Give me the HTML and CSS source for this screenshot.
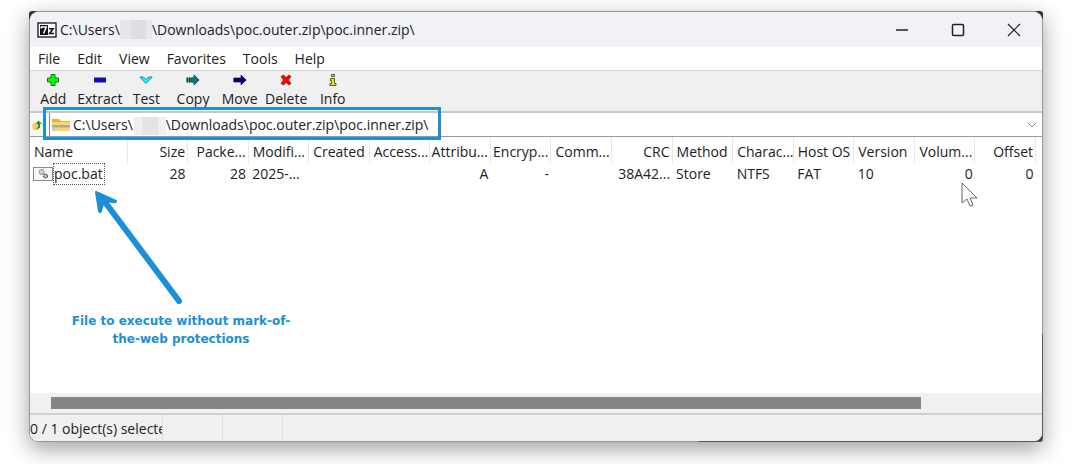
FILE: index.html
```html
<!DOCTYPE html>
<html lang="en">
<head>
  <meta charset="UTF-8">
  <meta name="viewport" content="width=device-width, initial-scale=1.0">
  <title>7-Zip File Manager</title>
  <link rel="stylesheet" href="styles.css">
</head>
<body>
  <div class="frame">
    <div class="window">
      <header class="titlebar">
        <svg class="logo" width="20" height="16" viewBox="0 0 20 16">
          <rect x="1" y="1" width="18" height="14" fill="#fff" stroke="#111" stroke-width="1.3"/>
          <rect x="3" y="3" width="8" height="10" fill="#111"/>
          <path d="M4.300 6.500V5h5L6.500 11.500" fill="none" stroke="#fff" stroke-width="1.500"/>
          <path d="M12 6.800h4L12.700 11.500h4.300" fill="none" stroke="#111" stroke-width="1.600"/>
        </svg>
        <h1 class="title">C:\Users\<span class="redacted"></span>\Downloads\poc.outer.zip\poc.inner.zip\</h1>
        <div class="controls">
          <button type="button" aria-label="Minimize"><svg width="14" height="14" viewBox="0 0 14 14"><path d="M1 7h12"/></svg></button>
          <button type="button" aria-label="Maximize"><svg width="14" height="14" viewBox="0 0 14 14"><rect x="1.500" y="1.500" width="11" height="11" rx="1"/></svg></button>
          <button type="button" aria-label="Close"><svg width="14" height="14" viewBox="0 0 14 14"><path class="thin" d="M1 1l12 12M13 1L1 13"/></svg></button>
        </div>
      </header>

      <nav class="menu">
        <button type="button">File</button>
        <button type="button">Edit</button>
        <button type="button">View</button>
        <button type="button">Favorites</button>
        <button type="button">Tools</button>
        <button type="button">Help</button>
      </nav>

      <div class="toolbar">
        <button type="button">
          <svg width="14" height="14" viewBox="0 0 14 14"><path d="M5 1.500h4V5h3.500v4H9v3.500H5V9H1.500V5H5z" fill="#0f0" stroke="#1a7a1a"/></svg>
          Add
        </button>
        <button type="button">
          <svg width="14" height="14" viewBox="0 0 14 14"><rect x="1.500" y="5" width="11" height="4" fill="#00f" stroke="#223"/></svg>
          Extract
        </button>
        <button type="button">
          <svg width="14" height="14" viewBox="0 0 14 14"><path d="M.8 4h3.700L7 6.500 9.500 4h3.700L7 10.500z" fill="#0ff" stroke="#2a8a90"/></svg>
          Test
        </button>
        <button type="button">
          <svg width="14" height="14" viewBox="0 0 14 14"><path d="M.8 4.800h1.200v4.400H.8zM3 4.800h1.500v4.400H3zM5.500 4.800H8V2l5.200 5L8 12V9.200H5.500z" fill="#008080" stroke="#133" stroke-width=".7"/></svg>
          Copy
        </button>
        <button type="button">
          <svg width="14" height="14" viewBox="0 0 14 14"><path d="M.8 5H8V2l5.200 5L8 12V9H.8z" fill="#000080" stroke="#112" stroke-width=".7"/></svg>
          Move
        </button>
        <button type="button">
          <svg width="14" height="14" viewBox="0 0 14 14"><path d="M2 3.500L4.500 2 7 4.500 10 2l2 1.500L9.500 7l2.500 3.500-2 1.500-3-2.500L4.500 12 2 10.500 4.500 7z" fill="#f00" stroke="#822" stroke-width=".8"/></svg>
          Delete
        </button>
        <button type="button">
          <svg width="14" height="14" viewBox="0 0 14 14"><path d="M5.500 1.500h3v2h-3zM4.500 5.500h4v5H10v2H4v-2h1.500v-3h-1z" fill="#ee0" stroke="#443" stroke-width=".9"/></svg>
          Info
        </button>
      </div>

      <div class="address">
        <button class="up" type="button" aria-label="Up one level">
          <svg width="10" height="12" viewBox="0 0 10 12">
            <path d="M0 5l3-1 4 1v6H1z" fill="#f0d060"/>
            <path d="M4 10l2-2V5H3.500L6.500 1.500 10 5H8v4z" fill="#2a9a2a"/>
          </svg>
        </button>
        <div class="combo">
          <svg width="18" height="14" viewBox="0 0 18 14">
            <path d="M0 1h7l2 2h9v10H0z" fill="#f2b030"/>
            <path d="M0 4h18v9H0z" fill="#ffd46a"/>
            <path d="M0 7h18v2.500H0z" fill="#a9a9a6"/>
            <path d="M0 9.500h3V13H0z" fill="#c9c9c4"/>
          </svg>
          <input class="path" type="text" aria-label="Path" value="C:\Users\&nbsp;&nbsp;&nbsp;&nbsp;&nbsp;&nbsp;&nbsp;&nbsp;&nbsp;\Downloads\poc.outer.zip\poc.inner.zip\">
          <span class="redacted"></span>
          <button class="drop" type="button" aria-label="Recent paths">
            <svg width="10" height="6" viewBox="0 0 10 6"><path d="M1 1l4 4 4-4"/></svg>
          </button>
        </div>
        <div class="highlight"></div>
      </div>

      <main class="list">
        <table class="files">
          <colgroup>
            <col class="col-name">
            <col span="15">
          </colgroup>
          <thead>
            <tr>
              <th>Name</th>
              <th class="num">Size</th>
              <th class="num">Packe...</th>
              <th>Modifi...</th>
              <th>Created</th>
              <th>Access...</th>
              <th class="num">Attribu...</th>
              <th class="num">Encryp...</th>
              <th>Comm...</th>
              <th class="num">CRC</th>
              <th>Method</th>
              <th>Charac...</th>
              <th>Host OS</th>
              <th>Version</th>
              <th class="num">Volum...</th>
              <th class="num">Offset</th>
            </tr>
          </thead>
          <tbody>
            <tr>
              <td>
                <div class="file">
                  <svg width="20" height="16" viewBox="0 0 20 16">
                    <rect x=".5" y="1.500" width="19" height="13" fill="#f8f8f8" stroke="#888"/>
                    <circle cx="8.500" cy="6" r="2.200" fill="#dfe6ea" stroke="#8a959d" stroke-width="1.500" stroke-dasharray="1.300 .4"/>
                    <circle cx="12.500" cy="10" r="1.800" fill="none" stroke="#4f5a62" stroke-width="1.600" stroke-dasharray="1.500 .4"/>
                  </svg>
                  <span class="file-name">poc.bat</span>
                </div>
              </td>
              <td class="num">28</td>
              <td class="num">28</td>
              <td>2025-...</td>
              <td></td>
              <td></td>
              <td class="num">A</td>
              <td class="num">-</td>
              <td></td>
              <td class="num">38A42...</td>
              <td>Store</td>
              <td>NTFS</td>
              <td>FAT</td>
              <td>10</td>
              <td class="num">0</td>
              <td class="num">0</td>
            </tr>
          </tbody>
        </table>

        <!-- annotation -->
        <svg class="arrow" width="88" height="116" viewBox="0 0 88 116">
          <path d="M84 110L10 11" stroke-width="6"/>
          <path class="head" d="M1 1l20 9q0 2-3 1l-9-1-3 10q-1 2-2 0z"/>
        </svg>
        <p class="note">File to execute without mark-of-the-web protections</p>

        <svg class="cursor" width="17" height="25" viewBox="0 0 17 25">
          <path d="M1 1v20l5-4 3 7 3-1-3-7h7z"/>
        </svg>
      </main>

      <div class="scrollbar"><div class="thumb"></div></div>

      <footer class="status">
        <span>0 / 1 object(s) selected</span>
        <span></span>
        <span></span>
        <span></span>
      </footer>
    </div>
  </div>
</body>
</html>
```

FILE: styles.css
```css
* {
  box-sizing: border-box;
}

body {
  margin: 0;
  height: 100vh;
  padding: 11px 37px 22px 29px;
  background-color: #fff;
  color: #222;
  font-family: "Open Sans", "Noto Sans", sans-serif;
  font-size: 14px;
  line-height: 20px;
}

button {
  padding: 0;
  border: none;
  background: none;
  color: inherit;
  font: inherit;
}

svg {
  display: block;
  flex: none;
}

.frame {
  height: 100%;
  padding: 1px;
  border-radius: 3px 3px 3px 9px;
  background:
    linear-gradient(#444, #444) right bottom / 34% 25% no-repeat,
    linear-gradient(#999, #999) 0 8px / 100% 100% no-repeat,
    linear-gradient(90deg, #333 6px, #939396 8px, #939396 calc(100% - 8px), #333 calc(100% - 6px));
  box-shadow: 0 7px 22px rgba(0, 0, 0, 0.38);
}

.window {
  display: flex;
  flex-direction: column;
  height: 100%;
  border-radius: 8px;
  background-color: #fff;
  overflow: hidden;
}

.titlebar {
  display: flex;
  align-items: center;
  flex: none;
  height: 35px;
  padding-left: 7px;
  background-color: #f1f1f8;
}

.title {
  display: flex;
  flex: 1;
  margin: 0 0 0 3px;
  font-size: 14px;
  font-weight: normal;
}

.redacted {
  width: 32px;
  height: 19px;
  background: linear-gradient(90deg, #e6e6ea 35%, #dedee2 35% 80%, #e8e8ec 80%);
}

.controls {
  display: flex;
}

.controls button {
  display: grid;
  place-items: center;
  width: 56px;
  height: 34px;
}

.controls path,
.controls rect {
  fill: none;
  stroke: #222;
  stroke-width: 1.5;
}

.controls .thin {
  stroke-width: 1.2;
}

.menu {
  display: flex;
  gap: 17px;
  flex: none;
  height: 23px;
  padding: 1px 8px;
}

.toolbar {
  display: grid;
  grid-template-columns: repeat(7, 1fr);
  flex: none;
  width: 100%;
  height: 43px;
  padding-right: calc(100% - 326px);
  border-top: 1px solid #d4d4d4;
  border-bottom: 2px solid #c8c8c8;
  background-color: #f0f0f0;
}

.toolbar button {
  display: flex;
  flex-direction: column;
  align-items: center;
  padding-top: 2px;
  gap: 2px;
}

.address {
  display: flex;
  position: relative;
  z-index: 1;
  flex: none;
  height: 24px;
  border-bottom: 1px solid #999;
}

.up {
  width: 19px;
  padding-left: 2px;
  background-color: #f8f8f8;
}

.combo {
  display: flex;
  position: relative;
  align-items: center;
  flex: 1;
  padding: 0 5px 0 2px;
  border-left: 1px solid #888;
}

.path {
  flex: 1;
  min-width: 0;
  padding: 0 3px;
  border: none;
  outline: none;
  background: none;
  color: inherit;
  font: inherit;
}

.combo .redacted {
  position: absolute;
  left: 84px;
  top: 4px;
  height: 18px;
  background: linear-gradient(90deg, #eee 25%, #e4e4e4 25% 75%, #f0f0f0 75%);
}

.drop path {
  fill: none;
  stroke: #888;
}

.highlight {
  position: absolute;
  left: 13px;
  top: -6px;
  width: 398px;
  height: 33px;
  border: 3px solid #1b90d6;
}

.list {
  position: relative;
  flex: 1;
  min-height: 0;
}

.files {
  width: calc(100% - 6px);
  table-layout: fixed;
  border-collapse: collapse;
}

.col-name {
  width: 97px;
}

.files th,
.files td {
  height: 22px;
  padding: 0 0 0 4px;
  font-weight: normal;
  text-align: left;
  white-space: nowrap;
}

.files th {
  height: 26px;
  padding-top: 3px;
  border-right: 1px solid #e8e8e8;
}

.files .num {
  padding-right: 2px;
  padding-left: 0;
  text-align: right;
}

.file {
  display: flex;
  align-items: center;
  margin-left: -1px;
}

.file-name {
  padding-right: 1px;
  border: 1px dotted #555;
}

.arrow {
  position: absolute;
  left: 65px;
  top: 54px;
  stroke: #1b90d6;
  stroke-linecap: round;
}

.arrow .head {
  fill: #1b90d6;
  stroke-width: 2;
  stroke-linejoin: round;
}

.note {
  position: absolute;
  left: 36px;
  top: 175px;
  width: 230px;
  margin: 0;
  color: #1b90d6;
  font-family: "Arial Black", "DejaVu Sans", sans-serif;
  font-size: 12px;
  font-weight: 900;
  line-height: 18px;
  text-align: center;
}

.cursor {
  position: absolute;
  right: 64px;
  top: 45px;
  fill: #fff;
  stroke: #666;
}

.scrollbar {
  flex: none;
  height: 20px;
  padding: 4px 12% 4px 21px;
  background-color: #f0f0f0;
}

.thumb {
  height: 12px;
  background-color: #858585;
}

.status {
  display: flex;
  flex: none;
  height: 28px;
  border-top: 2px solid #d0d0d0;
  background-color: #f0f0f0;
}

.status span {
  width: 60px;
  padding-top: 4px;
  border-right: 1px solid #dcdcdc;
  overflow: hidden;
  white-space: nowrap;
}

.status span:first-child {
  width: 133px;
}

.status span:last-child {
  flex: 1;
  border-right: none;
}
```
